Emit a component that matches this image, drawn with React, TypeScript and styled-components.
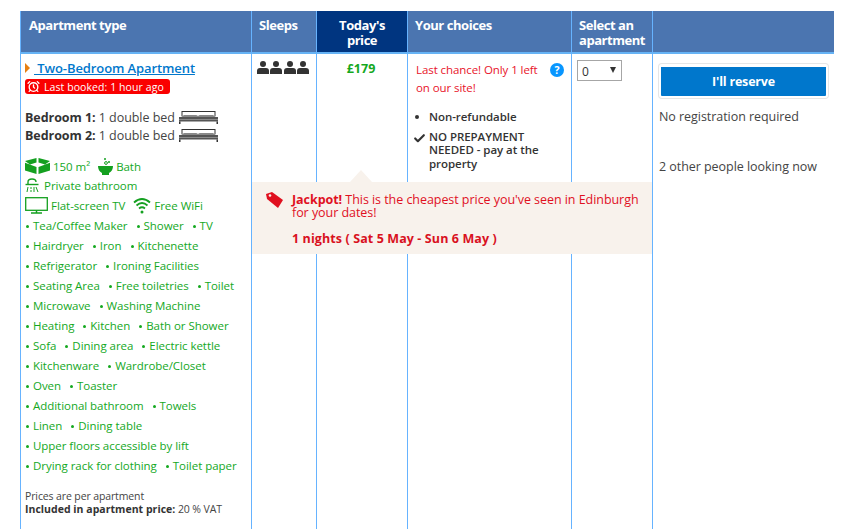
import React from "react";
import styled, { createGlobalStyle } from "styled-components";
import { AlarmClock, Check } from "lucide-react";

const Global = createGlobalStyle`
  html, body { margin: 0; padding: 0; background: #fff; height: 529px; overflow: hidden; }
  body { font-family: "Open Sans", "Noto Sans", sans-serif; color: #333; }
`;
const Page = styled.div`
  padding: 11px 26px 0 20px;
  height: 518px;
  overflow: hidden;
`;
const Table = styled.div`
  display: grid;
  grid-template-columns: 231px 65px 91px 164px 81px 182px;
  grid-template-rows: 43px 475px;
  position: relative;
  width: 814px;
`;
const Head = styled.div<{ $dark?: boolean; $center?: boolean; $first?: boolean }>`
  background: ${p => (p.$dark ? "#003580" : "#4b75b0")};
  border-bottom: 2px solid #66b3f5;
  border-left: 1px solid #66b3ff;
  box-sizing: border-box;
  color: #fff;
  font-size: 13px;
  font-weight: 700;
  line-height: 15px;
  letter-spacing: -0.45px;
  padding: ${p => (p.$center ? "7px 0 0 0" : p.$first ? "7px 0 0 8px" : "7px 0 0 7px")};
  text-align: ${p => (p.$center ? "center" : "left")};
`;
const Cell = styled.div`
  border-left: 1px solid #66b3ff;
  box-sizing: border-box;
  min-width: 0;
`;
const TypeCell = styled(Cell)`
  padding: 7px 0 0 4px;
  display: flex;
  flex-direction: column;
  align-items: flex-start;
`;
const TitleRow = styled.div`
  display: flex;
  align-items: center;
  height: 14px;
  font-size: 13px;
  font-weight: 600;
  letter-spacing: -0.1px;
  color: #0077cc;
`;
const Caret = styled.span`
  width: 0;
  height: 0;
  border-left: 5px solid #e77e10;
  border-top: 5px solid transparent;
  border-bottom: 5px solid transparent;
  margin-right: 4px;
`;
const TitleLink = styled.a`
  color: #0077cc;
  text-decoration: underline;
  white-space: pre;
`;
const Badge = styled.div`
  display: flex;
  align-items: center;
  gap: 4px;
  margin-top: 4px;
  height: 15px;
  padding: 0 6px 0 2px;
  background: #fa0000;
  border-radius: 3px;
  color: #fff;
  font-size: 10.5px;
  letter-spacing: 0.08px;
`;
const Beds = styled.div`
  margin-top: 14px;
  margin-bottom: 12px;
`;
const BedLine = styled.div`
  display: flex;
  align-items: center;
  height: 18px;
  font-size: 12.5px;
  letter-spacing: -0.05px;
  color: #444;
  white-space: pre;
  b { color: #333; font-weight: 700; }
`;
const FacRow = styled.div<{ $short?: boolean }>`
  display: flex;
  align-items: center;
  font-size: 11.5px;
  letter-spacing: -0.04px;
  color: #14a81e;
  white-space: pre;
  height: ${p => (p.$short ? "19px" : "20px")};
`;
const IconText = styled.span`
  display: inline-flex;
  align-items: center;
  margin-right: 8px;
  svg { margin-right: 3px; flex-shrink: 0; }
`;
const Item = styled.span`
  margin-right: 8px;
  &::before {
    content: "";
    display: inline-block;
    width: 3px;
    height: 3px;
    background: #14a81e;
    border-radius: 50%;
    margin: 0 4px 2px 1px;
  }
`;
const Notes = styled.div`
  margin-top: 15px;
  font-size: 10.5px;
  line-height: 13px;
  letter-spacing: -0.12px;
  color: #444;
  b { font-weight: 700; color: #333; letter-spacing: 0.03px; }
`;
const SleepCell = styled(Cell)`
  display: flex;
  gap: 1.3px;
  padding: 7px 0 0 5px;
  align-items: flex-start;
`;
const PriceCell = styled(Cell)`
  text-align: center;
  padding: 7px 2px 0 0;
  font-size: 12.5px;
  font-weight: 700;
  line-height: 16px;
  color: #14a81e;
`;
const ChoiceCell = styled(Cell)`
  padding: 7px 0 0 8px;
  position: relative;
`;
const Warn = styled.div`
  color: #e8132a;
  font-size: 11.5px;
  letter-spacing: -0.08px;
  line-height: 18px;
  width: 132px;
`;
const Help = styled.span`
  position: absolute;
  left: 142px;
  top: 9px;
  width: 14px;
  height: 14px;
  border-radius: 50%;
  background: #0896ff;
  color: #fff;
  font-size: 10.5px;
  font-weight: 700;
  text-align: center;
  line-height: 14px;
`;
const Conds = styled.div`
  margin-top: 13px;
  font-size: 11.5px;
  font-weight: 600;
  letter-spacing: -0.05px;
  line-height: 13.2px;
  color: #333;
  display: grid;
  grid-template-columns: 13px 1fr;
  row-gap: 7px;
  width: 136px;
`;
const Mark = styled.span`
  display: flex;
  justify-content: flex-start;
  align-items: flex-start;
  padding-top: 1px;
`;
const Dot = styled.i`
  display: block;
  width: 4px;
  height: 4px;
  margin: 4px 0 0 -1px;
  border-radius: 50%;
  background: #333;
`;
const SelectCell = styled(Cell)`
  padding: 6px 0 0 5px;
`;
const Pick = styled.div`
  width: 45px;
  height: 21px;
  box-sizing: border-box;
  border: 1px solid #a6a6a6;
  font-size: 12px;
  color: #333;
  display: flex;
  justify-content: space-between;
  padding: 2px 5px 0 4px;
  &::after {
    content: "";
    width: 0;
    height: 0;
    margin-top: 4px;
    border-left: 3.5px solid transparent;
    border-right: 3.5px solid transparent;
    border-top: 6px solid #333;
  }
`;
const ReserveCell = styled(Cell)`
  padding: 10px 0 0 6px;
  font-size: 12.5px;
  letter-spacing: -0.05px;
  color: #444;
`;
const Btn = styled.button`
  display: block;
  width: 169px;
  height: 34px;
  box-sizing: border-box;
  border-style: solid;
  border-color: #fff;
  border-width: 3px 2px 2px;
  box-shadow: 0 0 0 1px #e6e6e6;
  border-radius: 3px;
  background: #0077cc;
  color: #fff;
  font: 700 12.5px "Open Sans", sans-serif;
  letter-spacing: -0.2px;
  padding: 0;
`;
const ReserveText = styled.div`
  margin-top: 10px;
  height: 50px;
  line-height: 18px;
`;
const Popup = styled.div`
  position: absolute;
  left: 232px;
  top: 171px;
  width: 400px;
  height: 72px;
  background: #f8f2ec;
  box-sizing: border-box;
  padding: 11px 10px 0 40px;
  color: #e0101f;
  font-size: 12.5px;
  letter-spacing: -0.05px;
  line-height: 13px;
  &::before {
    content: "";
    position: absolute;
    left: 98px;
    top: -12px;
    border-left: 11px solid transparent;
    border-right: 11px solid transparent;
    border-bottom: 12px solid #f8f2ec;
  }
`;
const TagIcon = styled.svg`
  position: absolute;
  left: 14px;
  top: 10px;
`;
const PopDates = styled.div`
  margin-top: 13px;
  font-weight: 700;
  color: #d9111e;
  letter-spacing: 0.1px;
`;

const Bed = () => (
  <svg width="39" height="14" viewBox="0 0 39 14" style={{ marginLeft: 4 }}>
    <path d="M2.500 6V1h34v5h-1V2h-32v4z" fill="#333" />
    <path d="M5 5h12q1 0 2 1 1-1 2-1h13l3 2H2z" fill="#888" />
    <rect x="0" y="7" width="39" height="4.500" fill="#555" />
    <rect x="0" y="9" width="39" height="1" fill="#8a8a8a" />
    <rect x="0" y="11.500" width="1.500" height="2.500" fill="#333" />
    <rect x="37.500" y="11.500" width="1.500" height="2.500" fill="#333" />
  </svg>
);
const Person = () => (
  <svg width="12" height="13" viewBox="0 0 12 13">
    <circle cx="6" cy="3" r="3" fill="#333" />
    <path d="M0 13v-3q0-3 3-3h6q3 0 3 3v3z" fill="#333" />
  </svg>
);
const Cube = () => (
  <svg width="25" height="16" viewBox="0 0 25 16">
    <path d="M0 3 11.500 0v4.500L5 6.500zM25 3 13.500 0v4.500L20 6.500zM0 4.800l11.500 4.200v7L0 12.500zM25 4.800l-11.500 4.200v7L25 12.500z" fill="#14a020" />
  </svg>
);
const Bowl = () => (
  <svg width="15" height="17" viewBox="0 0 15 17">
    <path d="M0 8h15q0 5-4 7v2H4v-2Q0 13 0 8z" fill="#14a020" />
    <circle cx="8" cy="5" r="1.400" fill="none" stroke="#14a020" />
    <circle cx="7" cy="1" r="1" fill="#14a020" />
    <circle cx="11" cy="4" r="1" fill="#14a020" />
  </svg>
);
const Shower = () => (
  <svg width="16" height="15" viewBox="0 0 16 15" fill="none" stroke="#14a020">
    <path d="M3 6V4q0-3 4-3t4 3" strokeWidth="1.400" />
    <path d="M0.500 6.500h13" strokeWidth="1.400" />
    <path d="M3 9l-1 5M6 9v2M6 12v2M9 9v5M11 9l2 5" strokeWidth="1" />
  </svg>
);
const Tv = () => (
  <svg width="23" height="17" viewBox="0 0 23 17" fill="none" stroke="#14a020">
    <rect x="0.700" y="0.700" width="21.600" height="12.600" strokeWidth="1.300" />
    <path d="M11.500 13v3M6 16h11" strokeWidth="1.500" />
  </svg>
);
const Wifi = () => (
  <svg width="18" height="17" viewBox="0 0 18 17" fill="none" stroke="#14a020" strokeWidth="1.800">
    <path d="M1 5.500q8-7 16 0M3.500 8.500q5.500-5 11 0M6 11.500q3-2.500 6 0" />
    <circle cx="9" cy="15" r="1.500" fill="#14a020" stroke="none" />
  </svg>
);

const rows = [
  ["Tea/Coffee Maker", "Shower", "TV"],
  ["Hairdryer", "Iron", "Kitchenette"],
  ["Refrigerator", "Ironing Facilities"],
  ["Seating Area", "Free toiletries", "Toilet"],
  ["Microwave", "Washing Machine"],
  ["Heating", "Kitchen", "Bath or Shower"],
  ["Sofa", "Dining area", "Electric kettle"],
  ["Kitchenware", "Wardrobe/Closet"],
  ["Oven", "Toaster"],
  ["Additional bathroom", "Towels"],
  ["Linen", "Dining table"],
  ["Upper floors accessible by lift"],
  ["Drying rack for clothing", "Toilet paper"],
];

export default function App() {
  return (
    <Page>
      <Global />
      <Table>
        <Head $first>Apartment type</Head>
        <Head>Sleeps</Head>
        <Head $dark $center>Today's<br />price</Head>
        <Head>Your choices</Head>
        <Head>Select an<br />apartment</Head>
        <Head />
        <TypeCell>
          <TitleRow><Caret /><TitleLink href="#"> Two-Bedroom Apartment</TitleLink></TitleRow>
          <Badge><AlarmClock size={13} strokeWidth={2.5} />Last booked: 1 hour ago</Badge>
          <Beds>
            <BedLine><b>Bedroom 1:</b> 1 double bed<Bed /></BedLine>
            <BedLine><b>Bedroom 2:</b> 1 double bed<Bed /></BedLine>
          </Beds>
          <FacRow><IconText><Cube />150 m²</IconText><IconText><Bowl />Bath</IconText></FacRow>
          <FacRow $short><IconText><Shower />Private bathroom</IconText></FacRow>
          <FacRow><IconText><Tv />Flat-screen TV</IconText><IconText><Wifi />Free WiFi</IconText></FacRow>
          {rows.map(r => (
            <FacRow key={r[0]}>{r.map(t => <Item key={t}>{t}</Item>)}</FacRow>
          ))}
          <Notes>
            Prices are per apartment<br />
            <b>Included in apartment price:</b> 20 % VAT
          </Notes>
        </TypeCell>
        <SleepCell><Person /><Person /><Person /><Person /></SleepCell>
        <PriceCell>£179</PriceCell>
        <ChoiceCell>
          <Warn>Last chance! Only 1 left on our site!</Warn>
          <Help>?</Help>
          <Conds>
            <Mark><Dot /></Mark><span>Non-refundable</span>
            <Mark><Check size={13} strokeWidth={4} color="#333" style={{ marginLeft: -3, marginTop: 1 }} /></Mark>
            <span>NO PREPAYMENT NEEDED - pay at the property</span>
          </Conds>
        </ChoiceCell>
        <SelectCell><Pick>0</Pick></SelectCell>
        <ReserveCell>
          <Btn>I'll reserve</Btn>
          <ReserveText>No registration required</ReserveText>
          <div>2 other people looking now</div>
        </ReserveCell>
        <Popup>
          <TagIcon width="18" height="16" viewBox="0 0 18 16">
            <path d="M0 2 6 0l11 8-5 8L1 7z" fill="#e0101f" />
            <circle cx="4" cy="3.500" r="1.300" fill="#f8f2ec" />
          </TagIcon>
          <b>Jackpot!</b> This is the cheapest price you've seen in Edinburgh for your dates!
          <PopDates>1 nights ( Sat 5 May - Sun 6 May )</PopDates>
        </Popup>
      </Table>
    </Page>
  );
}
